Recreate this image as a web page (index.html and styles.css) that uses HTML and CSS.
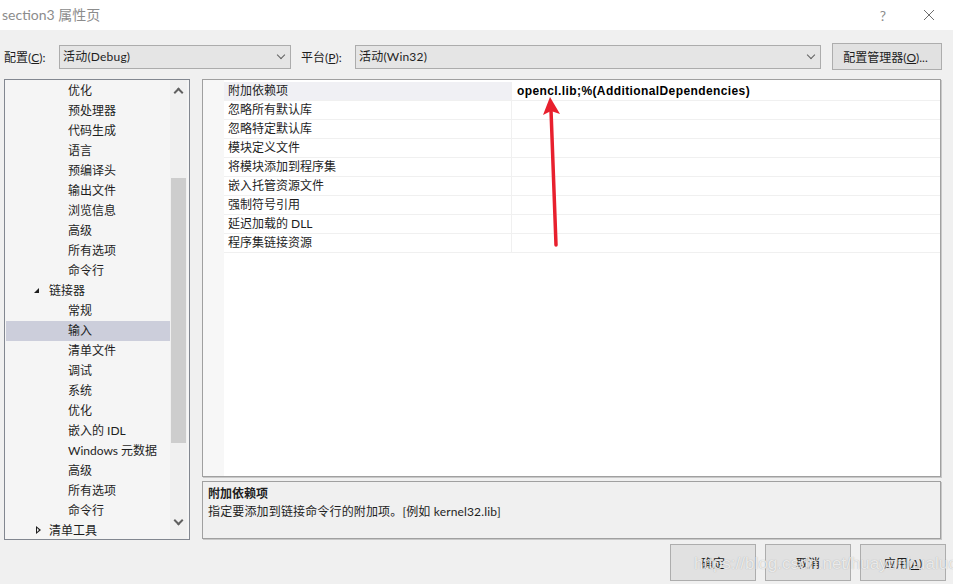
FILE: index.html
```html
<!DOCTYPE html>
<html>
    <head>
        <meta charset=utf-8>
        <title>section3 属性页</title>
        <link rel="stylesheet" href="styles.css">
    </head>
    <body>
        <div class="window">
            <div class="titlebar">
                <span class="title">section3 属性页</span>
                <span class="help">?</span>
                <span class="close">
                    <svg width="12" height="12" viewBox="0 0 12 12"><path d="M1 1L11 11M11 1L1 11" stroke="#6d6d6d" stroke-width="1"/></svg>
                </span>
            </div>

            <div class="toolbar">
                <label class="label">配置(<u>C</u>):</label>
                <div class="select config">活动(Debug)<span class="chev"></span></div>
                <label class="label platform-label">平台(<u>P</u>):</label>
                <div class="select platform">活动(Win32)<span class="chev"></span></div>
                <button class="btn manager">配置管理器(<u>O</u>)...</button>
            </div>

            <div class="main">
                <div class="tree">
                    <ul class="items">
                        <li class="l2">优化</li>
                        <li class="l2">预处理器</li>
                        <li class="l2">代码生成</li>
                        <li class="l2">语言</li>
                        <li class="l2">预编译头</li>
                        <li class="l2">输出文件</li>
                        <li class="l2">浏览信息</li>
                        <li class="l2">高级</li>
                        <li class="l2">所有选项</li>
                        <li class="l2">命令行</li>
                        <li class="l1 open">链接器</li>
                        <li class="l2">常规</li>
                        <li class="l2 selected">输入</li>
                        <li class="l2">清单文件</li>
                        <li class="l2">调试</li>
                        <li class="l2">系统</li>
                        <li class="l2">优化</li>
                        <li class="l2">嵌入的 IDL</li>
                        <li class="l2">Windows 元数据</li>
                        <li class="l2">高级</li>
                        <li class="l2">所有选项</li>
                        <li class="l2">命令行</li>
                        <li class="l1 closed">清单工具</li>
                    </ul>
                    <div class="scrollbar">
                        <span class="arrow up"></span>
                        <div class="thumb"></div>
                        <span class="arrow down"></span>
                    </div>
                </div>

                <div class="right">
                    <div class="grid">
                        <div class="row current"><span class="name">附加依赖项</span><span class="value">opencl.lib;%(AdditionalDependencies)</span></div>
                        <div class="row"><span class="name">忽略所有默认库</span><span class="value"></span></div>
                        <div class="row"><span class="name">忽略特定默认库</span><span class="value"></span></div>
                        <div class="row"><span class="name">模块定义文件</span><span class="value"></span></div>
                        <div class="row"><span class="name">将模块添加到程序集</span><span class="value"></span></div>
                        <div class="row"><span class="name">嵌入托管资源文件</span><span class="value"></span></div>
                        <div class="row"><span class="name">强制符号引用</span><span class="value"></span></div>
                        <div class="row"><span class="name">延迟加载的 DLL</span><span class="value"></span></div>
                        <div class="row"><span class="name">程序集链接资源</span><span class="value"></span></div>
                    </div>
                    <div class="desc">
                        <div class="desc-title">附加依赖项</div>
                        <div class="desc-text">指定要添加到链接命令行的附加项。[例如 kernel32.lib]</div>
                    </div>
                </div>
            </div>

            <div class="footer">
                <button class="btn action">确定</button>
                <button class="btn action">取消</button>
                <button class="btn action">应用(<u>A</u>)</button>
            </div>

            <svg class="arrow-mark" width="953" height="584" viewBox="0 0 953 584">
                <path d="M556 245L551 110" stroke="#e8202e" stroke-width="3.5" stroke-linecap="round"/>
                <path d="M550 97L543 115L551 111L560 114Z" fill="#e8202e"/>
            </svg>
            <div class="watermark">https://blog.csdn.net/huayunhualuo</div>
        </div>
    </body>
</html>
```

FILE: styles.css
```css
html, body {
    margin: 0;
    padding: 0;
    overflow: hidden;
    width: 100%;
    height: 100%;
    background: #f0f0f0;
}

.window {
    position: relative;
    width: 953px;
    height: 584px;
    font: 12px "Lato", "Noto Sans CJK SC", sans-serif;
    color: #1e1e1e;
}

.titlebar {
    height: 30px;
    background: #fff;
    display: flex;
    align-items: center;
}

.title {
    flex: 1;
    padding: 0 0 2px 2px;
    font-size: 14px;
    color: #8c8c8c;
}

.help {
    width: 46px;
    text-align: center;
    color: #8c8c8c;
    font-size: 14px;
}

.close {
    width: 46px;
    height: 14px;
    margin-right: 1px;
    display: flex;
    justify-content: center;
    align-items: center;
}

.toolbar {
    display: flex;
    align-items: center;
    height: 27px;
    margin-top: 13px;
    padding-left: 4px;
}

.label {
    width: 55px;
}

.platform-label {
    width: 54px;
    margin-left: 10px;
}

.select {
    position: relative;
    box-sizing: border-box;
    height: 24px;
    line-height: 22px;
    padding-left: 3px;
    background: #e5e5e5;
    border: 1px solid #acacac;
    letter-spacing: 0.2px;
}

.config {
    width: 232px;
}

.platform {
    width: 466px;
}

.chev {
    position: absolute;
    right: 6px;
    top: 6px;
    width: 5px;
    height: 5px;
    border-right: 1px solid #606060;
    border-bottom: 1px solid #606060;
    transform: rotate(45deg);
}

.btn {
    box-sizing: border-box;
    background: #e1e1e1;
    border: 1px solid #adadad;
    font: inherit;
    color: #1e1e1e;
    padding: 0;
}

.manager {
    width: 110px;
    height: 27px;
    margin-left: 11px;
    padding-right: 3px;
}

.main {
    display: flex;
    margin-top: 9px;
    height: 461px;
}

.tree {
    box-sizing: border-box;
    width: 186px;
    margin-left: 4px;
    border: 1px solid #828790;
    background: #f5f5f5;
    display: flex;
    overflow: hidden;
}

.items {
    flex: 1;
    margin: 0;
    padding: 1px 0 0;
    list-style: none;
}

.items li {
    height: 20px;
    line-height: 20px;
    white-space: nowrap;
    position: relative;
}

.l1 {
    padding-left: 44px;
}

.l2 {
    padding-left: 63px;
}

.selected {
    background: #cccedb;
    margin-left: 1px;
    padding-left: 62px;
}

.open:before {
    content: "";
    position: absolute;
    left: 29px;
    top: 7px;
    border-style: solid;
    border-width: 0 0 5px 5px;
    border-color: transparent transparent #1e1e1e transparent;
}

.closed:before {
    content: "";
    position: absolute;
    left: 31px;
    top: 5px;
    width: 0;
    height: 0;
    border-style: solid;
    border-width: 4px 0 4px 5px;
    border-color: transparent transparent transparent #1e1e1e;
}

.closed:after {
    content: "";
    position: absolute;
    left: 32px;
    top: 7px;
    border-style: solid;
    border-width: 2px 0 2px 2.5px;
    border-color: transparent transparent transparent #f5f5f5;
}

.scrollbar {
    width: 17px;
    margin-right: 2px;
    background: #f0f0f0;
    display: flex;
    flex-direction: column;
    align-items: center;
}

.arrow {
    width: 5px;
    height: 5px;
    border-left: 2px solid #606060;
    border-top: 2px solid #606060;
}

.up {
    margin-top: 9px;
    transform: rotate(45deg);
}

.down {
    margin-top: 74px;
    transform: rotate(225deg);
}

.thumb {
    width: 15px;
    height: 265px;
    margin-top: 82px;
    background: #cdcdcd;
}

.right {
    width: 739px;
    margin-left: 12px;
    display: flex;
    flex-direction: column;
}

.grid {
    box-sizing: border-box;
    height: 398px;
    border: 1px solid #a0a0a0;
    box-shadow: 1px 1px 0 #c8c8c8;
    padding-top: 2px;
    background: linear-gradient(to right, #f7f7f7 21px, #fff 21px);
}

.row {
    display: flex;
    height: 19px;
    line-height: 18px;
    margin-left: 21px;
}

.row .name {
    box-sizing: border-box;
    width: 288px;
    padding-left: 4px;
    background: #fff;
    border-bottom: 1px solid #f0f0f0;
    border-right: 1px solid #f0f0f0;
}

.row .value {
    flex: 1;
    padding-left: 5px;
    background: #fff;
    border-bottom: 1px solid #f0f0f0;
    font: bold 12px/18px "Liberation Sans", sans-serif;
    letter-spacing: 0.4px;
    color: #000;
}

.current .name {
    background: #f0f0f4;
}

.desc {
    box-sizing: border-box;
    height: 58px;
    margin-top: 4px;
    border: 1px solid #a0a0a0;
    box-shadow: 1px 1px 0 #c8c8c8;
    padding: 3px 5px;
    line-height: 18px;
}

.desc-title {
    font-weight: bold;
}

.desc-text {
    letter-spacing: 0.15px;
}

.footer {
    display: flex;
    justify-content: flex-end;
    gap: 9px;
    margin-top: 4px;
    padding-right: 7px;
}

.action {
    width: 86px;
    height: 37px;
}

.arrow-mark {
    position: absolute;
    left: 0;
    top: 0;
    pointer-events: none;
}

.watermark {
    position: absolute;
    left: 694px;
    top: 554px;
    font: 17px "Liberation Sans", sans-serif;
    color: rgba(255, 255, 255, 0.75);
    text-shadow: 0 0 1px rgba(120, 120, 120, 0.6);
    pointer-events: none;
    white-space: nowrap;
}
```
